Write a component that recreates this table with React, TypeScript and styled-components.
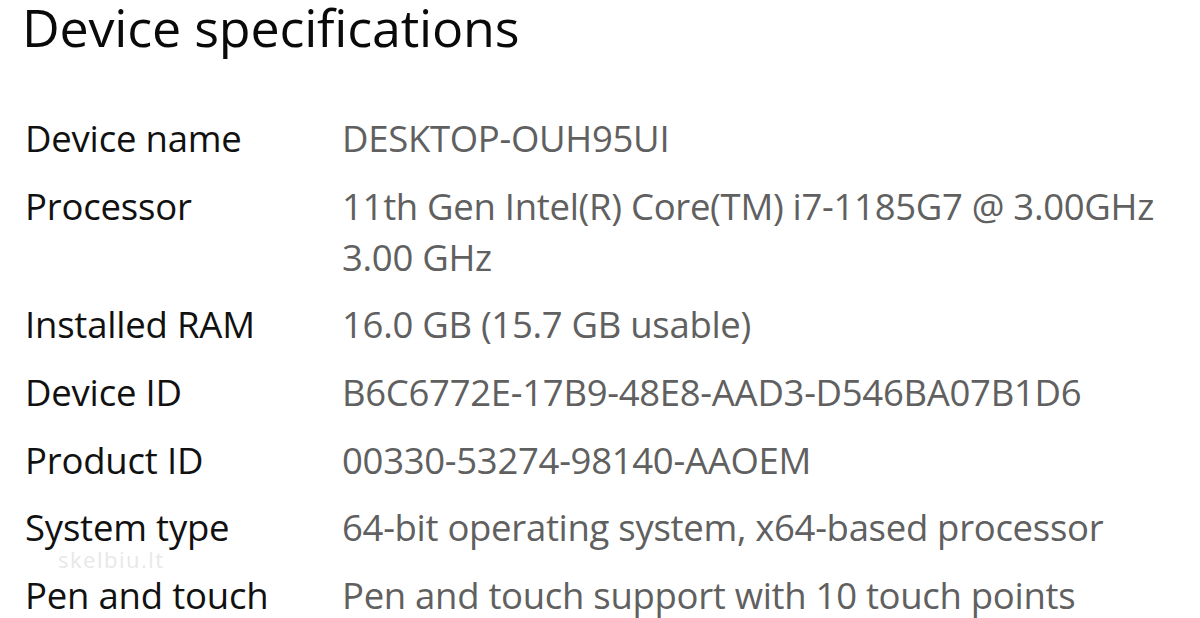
import React from "react";
import styled, { createGlobalStyle } from "styled-components";

const Global = createGlobalStyle`
  html, body { margin: 0; padding: 0; background: #ffffff; }
  body { font-family: "Open Sans", "Noto Sans", sans-serif; overflow: hidden; }
`;

const Page = styled.div`
  position: relative;
  width: 1200px;
  height: 618px;
  overflow: hidden;
  background: #fff;
  padding: 0 0 0 22px;
  box-sizing: border-box;
`;

const Title = styled.h1`
  margin: 1px 0 0 0;
  font-size: 52px;
  line-height: 52px;
  font-weight: 400;
  color: #0a0a0a;
  letter-spacing: -0.2px;
`;

const Specs = styled.dl`
  display: grid;
  grid-template-columns: 317px 1fr;
  row-gap: 16.7px;
  margin: 60px 0 0 3px;
  padding: 0;
`;

const Label = styled.dt`
  margin: 0;
  font-size: 36.5px;
  line-height: 51px;
  color: #111;
  white-space: nowrap;
  letter-spacing: -0.2px;
`;

const Value = styled.dd`
  margin: 0;
  font-size: 36.5px;
  line-height: 51px;
  color: #606060;
  white-space: nowrap;
  letter-spacing: -0.3px;
`;

const Watermark = styled.div`
  position: absolute;
  left: 58px;
  top: 550px;
  font-size: 22px;
  line-height: 18px;
  color: #e8e8e8;
  letter-spacing: 1.5px;
  pointer-events: none;
`;

const rows: [string, string[]][] = [
  ["Device name", ["DESKTOP-OUH95UI"]],
  ["Processor", ["11th Gen Intel(R) Core(TM) i7-1185G7 @ 3.00GHz", "3.00 GHz"]],
  ["Installed RAM", ["16.0 GB (15.7 GB usable)"]],
  ["Device ID", ["B6C6772E-17B9-48E8-AAD3-D546BA07B1D6"]],
  ["Product ID", ["00330-53274-98140-AAOEM"]],
  ["System type", ["64-bit operating system, x64-based processor"]],
  ["Pen and touch", ["Pen and touch support with 10 touch points"]],
];

export default function App() {
  return (
    <Page>
      <Global />
      <Title>Device specifications</Title>
      <Specs>
        {rows.map(([label, values]) => (
          <React.Fragment key={label}>
            <Label>{label}</Label>
            <Value>
              {values.map((v, i) => (
                <div key={i}>{v}</div>
              ))}
            </Value>
          </React.Fragment>
        ))}
      </Specs>
      <Watermark>skelbiu.lt</Watermark>
    </Page>
  );
}
